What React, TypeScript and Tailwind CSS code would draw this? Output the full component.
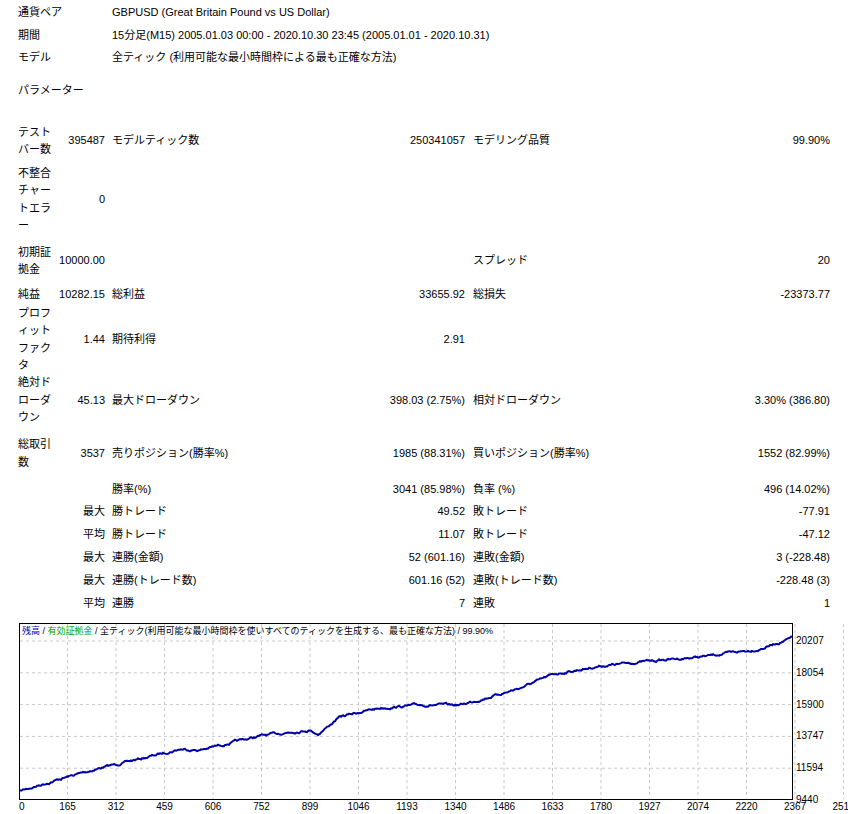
import React from "react";

const F = { fontFamily: '"Liberation Sans", "Noto Sans CJK JP", sans-serif' };

type Row = { a?: string; b?: string; c?: string; d?: string; e?: string; f?: string; h: number };

const rows: Row[] = [
  { a: "テスト バー数", b: "395487", c: "モデルティック数", d: "250341057", e: "モデリング品質", f: "99.90%", h: 41 },
  { a: "不整合 チャー トエラ ー", b: "0", h: 76 },
  { a: "初期証 拠金", b: "10000.00", e: "スプレッド", f: "20", h: 47 },
  { a: "純益", b: "10282.15", c: "総利益", d: "33655.92", e: "総損失", f: "-23373.77", h: 20 },
  { a: "プロフ ィット ファク タ", b: "1.44", c: "期待利得", d: "2.91", h: 68 },
  { a: "絶対ド ローダ ウン", b: "45.13", c: "最大ドローダウン", d: "398.03 (2.75%)", e: "相対ドローダウン", f: "3.30% (386.80)", h: 56 },
  { a: "総取引 数", b: "3537", c: "売りポジション(勝率%)", d: "1985 (88.31%)", e: "買いポジション(勝率%)", f: "1552 (82.99%)", h: 50 },
  { c: "勝率(%)", d: "3041 (85.98%)", e: "負率 (%)", f: "496 (14.02%)", h: 22 },
  { b: "最大", c: "勝トレード", d: "49.52", e: "敗トレード", f: "-77.91", h: 23 },
  { b: "平均", c: "勝トレード", d: "11.07", e: "敗トレード", f: "-47.12", h: 23 },
  { b: "最大", c: "連勝(金額)", d: "52 (601.16)", e: "連敗(金額)", f: "3 (-228.48)", h: 23 },
  { b: "最大", c: "連勝(トレード数)", d: "601.16 (52)", e: "連敗(トレード数)", f: "-228.48 (3)", h: 23 },
  { b: "平均", c: "連勝", d: "7", e: "連敗", f: "1", h: 23 },
];

function series() {
  const pts: [number, number][] = [
    [20, 790], [60, 778], [100, 767], [140, 758], [180, 748], [200, 749], [230, 742], [260, 735],
    [290, 731], [310, 729], [318, 733], [340, 716], [360, 711], [380, 707], [420, 704], [460, 704],
    [500, 693], [520, 687], [555, 673], [600, 665], [650, 660], [700, 656], [730, 652], [760, 648], [792, 637],
  ];
  let seed = 7;
  const rnd = () => { seed = (seed * 16807) % 2147483647; return seed / 2147483647; };
  const out: string[] = [];
  let noise = 0;
  for (let x = 20; x <= 792; x += 1) {
    let i = 0;
    while (i < pts.length - 2 && pts[i + 1][0] < x) i++;
    const [x0, y0] = pts[i], [x1, y1] = pts[i + 1];
    const y = y0 + ((y1 - y0) * (x - x0)) / (x1 - x0);
    noise = noise * 0.8 + (rnd() - 0.5) * 1.6;
    out.push(`${x},${(y + noise).toFixed(1)}`);
  }
  return out.join(" ");
}

function Chart() {
  const xs = ["0","165","312","459","606","752","899","1046","1193","1340","1486","1633","1780","1927","2074","2220","2367","2514","2661","2808","2954","3101","3248","3395","3542"];
  const ys = ["20207","18054","15900","13747","11594","9440"];
  return (
    <svg width="848" height="199" className="block">
      <rect x="19.5" y="7.5" width="773" height="176" fill="white" stroke="#000" />
      {xs.map((_, i) => i > 0 && (
        <line key={i} x1={19 + i * 48.5} x2={19 + i * 48.5} y1={8} y2={183} stroke="#c8c8c8" strokeDasharray="3 3" />
      ))}
      {ys.map((_, i) => i < 5 && (
        <line key={i} x1={20} x2={792} y1={25 + i * 31.8} y2={25 + i * 31.8} stroke="#c8c8c8" strokeDasharray="3 3" />
      ))}
      <g transform="translate(0,-615)">
        <polyline points={series()} fill="none" stroke="#0000a8" strokeWidth="2" />
      </g>
      <text x="22" y="18" fontSize="9" style={F}>
        <tspan fill="#0000a8">残高</tspan><tspan fill="#000"> / </tspan>
        <tspan fill="#00a000">有効証拠金</tspan>
        <tspan fill="#000"> / 全ティック(利用可能な最小時間枠を使いすべてのティックを生成する、最も正確な方法) / 99.90%</tspan>
      </text>
      {ys.map((y, i) => (
        <text key={y} x="796" y={28 + i * 31.8} fontSize="10" style={F}>{y}</text>
      ))}
      {xs.map((x, i) => (
        <text key={x} x={19 + i * 48.5} y="194" fontSize="10" textAnchor={i === 0 ? "start" : "middle"} style={F}>{x}</text>
      ))}
    </svg>
  );
}

export default function App() {
  return (
    <div className="w-[848px] h-[814px] bg-white text-black text-[11px] overflow-hidden" style={F}>
      <div className="pt-[1px]">
        {[
          ["通貨ペア", "GBPUSD (Great Britain Pound vs US Dollar)"],
          ["期間", "15分足(M15) 2005.01.03 00:00 - 2020.10.30 23:45 (2005.01.01 - 2020.10.31)"],
          ["モデル", "全ティック (利用可能な最小時間枠による最も正確な方法)"],
        ].map(([l, v]) => (
          <div key={l} className="flex h-[22.5px] items-center">
            <div className="w-[112px] pl-[18px]">{l}</div>
            <div>{v}</div>
          </div>
        ))}
        <div className="pl-[18px] mt-[12px] h-[20px] flex items-center">パラメーター</div>
      </div>
      <div className="mt-[20px] ml-[18px]">
        {rows.map((r, i) => (
          <div key={i} className="grid grid-cols-[37px_50px_7px_268px_85px_8px_227px_130px] items-center leading-[17.5px]" style={{ height: r.h }}>
            <div className="break-all">{r.a}</div>
            <div className="text-right whitespace-nowrap">{r.b}</div>
            <div />
            <div>{r.c}</div>
            <div className="text-right whitespace-nowrap">{r.d}</div>
            <div />
            <div>{r.e}</div>
            <div className="text-right whitespace-nowrap">{r.f}</div>
          </div>
        ))}
      </div>
      <Chart />
    </div>
  );
}
